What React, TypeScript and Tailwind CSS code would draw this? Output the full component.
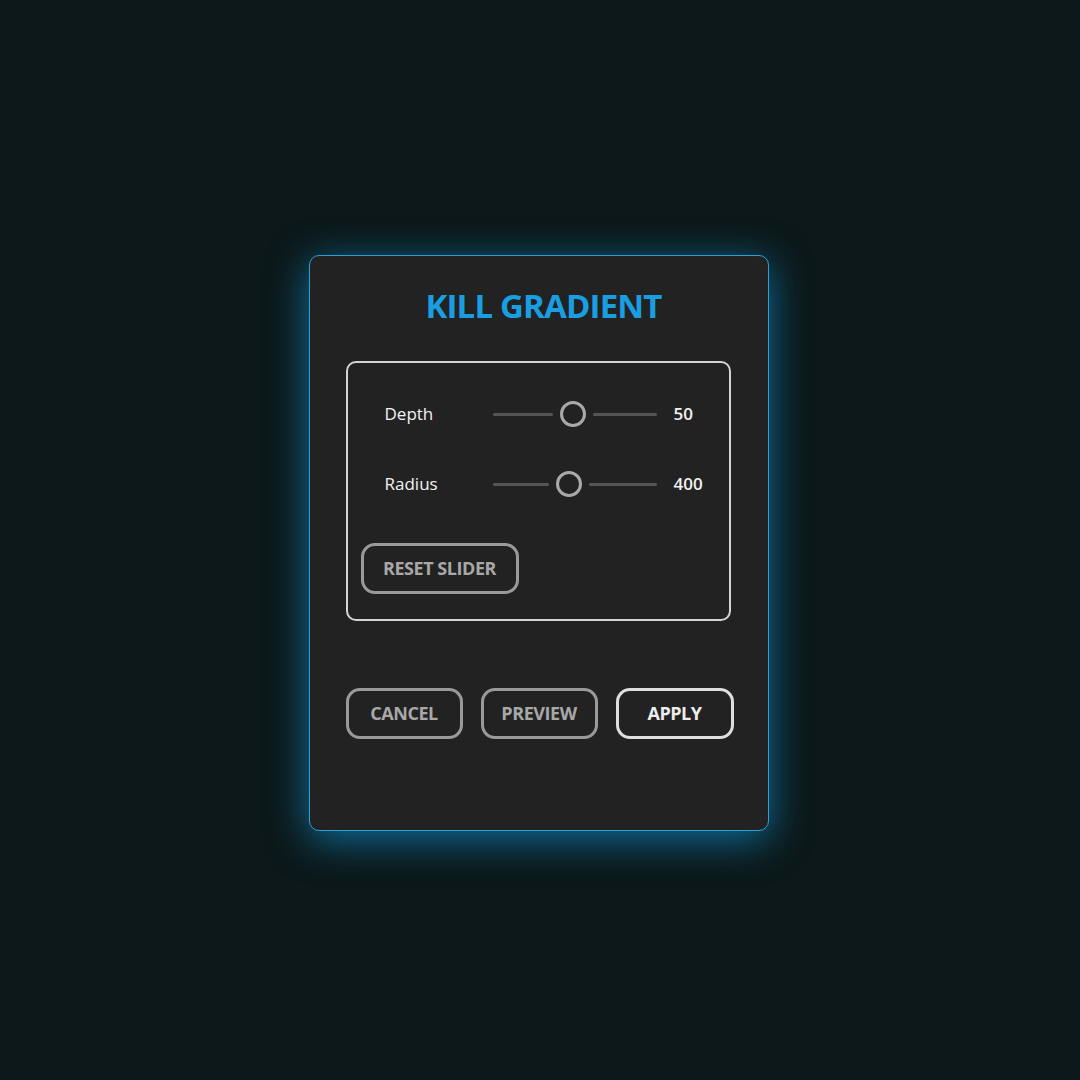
import { useState } from "react";

type SliderRowProps = {
  label: string;
  value: number;
  // where the knob sits along the track, 0..1
  position: number;
};

const TRACK_WIDTH = 164;
const KNOB = 26;
const GAP = 7;

function SliderRow({ label, value, position }: SliderRowProps) {
  const center = Math.round(TRACK_WIDTH * position);
  const left = center - KNOB / 2 - GAP;
  const right = TRACK_WIDTH - center - KNOB / 2 - GAP;

  return (
    <div className="flex items-center h-[30px]">
      <span className="w-[108px] text-[17px] font-medium text-[#f2f2f2]">{label}</span>
      <div className="flex items-center w-[164px]">
        <div className="h-[3px] rounded-full bg-[#555555]" style={{ width: left }} />
        <div
          className="rounded-full border-[3px] border-[#a9a9a9] bg-[#222222] shrink-0"
          style={{ width: KNOB, height: KNOB, marginLeft: GAP, marginRight: GAP }}
        />
        <div className="h-[3px] rounded-full bg-[#555555]" style={{ width: right }} />
      </div>
      <span className="ml-[17px] text-[17px] font-semibold text-[#f2f2f2]">{value}</span>
    </div>
  );
}

function OutlineButton({
  children,
  bright,
  className = "",
}: {
  children: string;
  bright?: boolean;
  className?: string;
}) {
  return (
    <button
      type="button"
      className={
        "shrink-0 h-[51px] rounded-[14px] border-[3px] bg-transparent text-[18px] font-bold tracking-tight " +
        (bright
          ? "border-[#dedede] text-[#ececec] "
          : "border-[#9a9a9a] text-[#a8a8a8] ") +
        className
      }
    >
      {children}
    </button>
  );
}

export default function App() {
  const [depth] = useState(50);
  const [radius] = useState(400);

  return (
    <div
      className="w-full h-[1080px] bg-[#0c1819] flex justify-center pt-[255px]"
      style={{ fontFamily: '"Open Sans", "Noto Sans", sans-serif' }}
    >
      <div className="mr-[3px] w-[460px] h-[576px] rounded-[10px] border border-[#2b9fd9] bg-[#222222] shadow-[0_8px_40px_rgba(16,150,215,0.7)] px-[36px] flex flex-col">
        <h1 className="mt-[30px] pl-[10px] text-center text-[33px] font-bold text-[#1a9ee2] tracking-tight leading-[40px]">
          KILL GRADIENT
        </h1>

        <div className="mt-[35px] w-[385px] h-[260px] rounded-[10px] border-2 border-[#d4d4d4] pl-[37px] pt-[36px] flex flex-col">
          <div className="flex flex-col gap-[40px]">
            <SliderRow label="Depth" value={depth} position={0.49} />
            <SliderRow label="Radius" value={radius} position={0.465} />
          </div>
          <OutlineButton className="mt-[44px] -ml-[24px] w-[158px]">RESET SLIDER</OutlineButton>
        </div>

        <div className="mt-[67px] flex gap-[18px]">
          <OutlineButton className="w-[117px]">CANCEL</OutlineButton>
          <OutlineButton className="w-[117px]">PREVIEW</OutlineButton>
          <OutlineButton bright className="w-[118px]">APPLY</OutlineButton>
        </div>
      </div>
    </div>
  );
}
